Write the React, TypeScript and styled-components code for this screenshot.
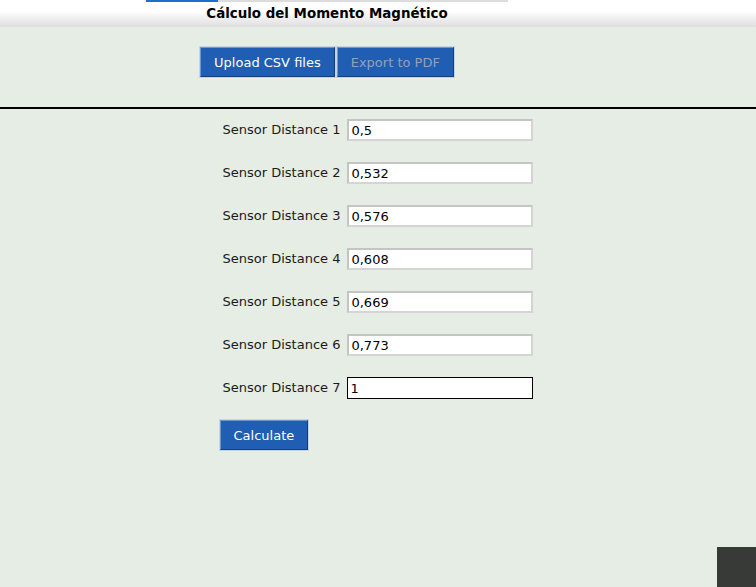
import React from "react";
import styled, { createGlobalStyle } from "styled-components";

const Global = createGlobalStyle`
  html, body { margin: 0; padding: 0; background: #e6ede5; }
  body { font-family: "DejaVu Sans", "Liberation Sans", sans-serif; color: #1a1a1a; height: 587px; overflow: hidden; }
`;

const Header = styled.header`
  height: 27px;
  background: linear-gradient(to bottom, #ffffff 0%, #ffffff 40%, #dedede 100%);
`;

const Column = styled.div`
  width: 654px;
  display: flex;
  flex-direction: column;
  align-items: center;
`;

const Progress = styled.div`
  width: 362px;
  height: 2px;
  background: #dcdcdc;
  display: flex;
`;

const ProgressFill = styled.div`
  height: 100%;
  background: #1a6fd0;
`;

const Title = styled.h1`
  margin: 4px 0 0;
  font-size: 13.4px;
  font-weight: bold;
  color: #000;
  line-height: 15px;
`;

const ToolbarBand = styled.div`
  height: 80px;
  border-bottom: 2px solid #000;
`;

const Toolbar = styled.div`
  width: 654px;
  padding-top: 20px;
  display: flex;
  justify-content: center;
  gap: 2px;
`;

const Button = styled.button<{ $disabled?: boolean }>`
  height: 30px;
  padding: 0 13px;
  font-family: "DejaVu Sans", sans-serif;
  font-size: 13px;
  background: #1f5eb2;
  color: ${(p) => (p.$disabled ? "#8fa3bd" : "#ffffff")};
  border: 1px solid #123f7c;
  border-top-color: #6d97d0;
  border-left-color: #6d97d0;
  box-shadow: 0 0 0 1px #c9d3dc;
  cursor: pointer;
`;

const FormWrap = styled.div`
  display: flex;
  justify-content: center;
  padding-top: 10px;
`;

const Form = styled.div`
  display: flex;
  flex-direction: column;
  gap: 21px;
`;

const Row = styled.label`
  display: flex;
  align-items: center;
  gap: 7px;
  font-size: 13px;
  color: #1a1a1a;
  line-height: 22px;
`;

const Input = styled.input<{ $focused?: boolean }>`
  width: 186px;
  height: 22px;
  box-sizing: border-box;
  padding: 0 2px;
  font-family: "DejaVu Sans", sans-serif;
  font-size: 13px;
  color: #000;
  background: #fff;
  outline: none;
  border-style: solid;
  border-width: ${(p) => (p.$focused ? "1.5px" : "2px")};
  border-color: ${(p) => (p.$focused ? "#000" : "#d4d4d4")};
  ${(p) => (p.$focused ? "" : "border-top-color: #c4c4c4; border-left-color: #c4c4c4;")}
`;

const Actions = styled.div`
  padding-top: 0px;
  margin-left: -3px;
`;

const Corner = styled.div`
  position: fixed;
  right: 0;
  bottom: 0;
  width: 39px;
  height: 40px;
  background: #373a37;
`;

const distances = ["0,5", "0,532", "0,576", "0,608", "0,669", "0,773", "1"];

export default function App() {
  return (
    <>
      <Global />
      <Header>
        <Column>
          <Progress>
            <ProgressFill style={{ width: "20%" }} />
          </Progress>
          <Title>Cálculo del Momento Magnético</Title>
        </Column>
      </Header>
      <ToolbarBand>
        <Toolbar>
          <Button>Upload CSV files</Button>
          <Button $disabled>Export to PDF</Button>
        </Toolbar>
      </ToolbarBand>
      <FormWrap>
        <Form>
          {distances.map((d, i) => (
            <Row key={i}>
              Sensor Distance {i + 1}
              <Input defaultValue={d} $focused={i === 6} autoFocus={i === 6} />
            </Row>
          ))}
          <Actions>
            <Button>Calculate</Button>
          </Actions>
        </Form>
      </FormWrap>
      <Corner />
    </>
  );
}
